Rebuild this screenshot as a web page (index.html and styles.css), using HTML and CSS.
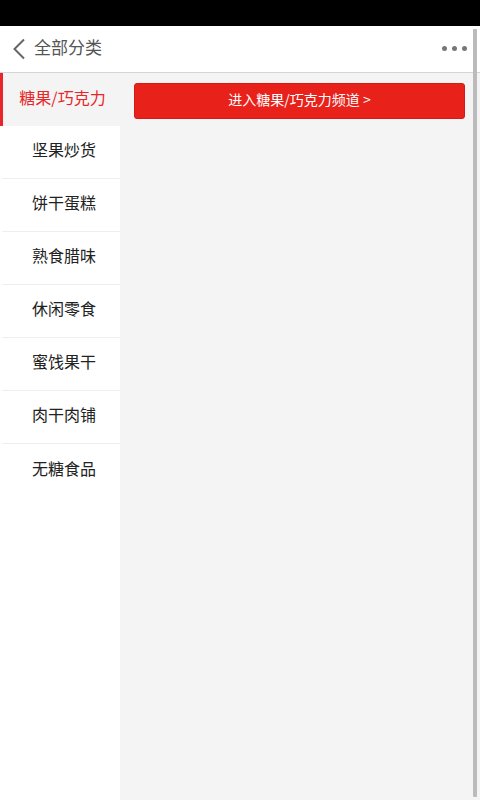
FILE: index.html
```html
<!DOCTYPE html>
<html lang="zh">
<head>
<meta charset="utf-8">
<link rel="stylesheet" href="styles.css">
</head>
<body>
<div class="app">
  <div class="statusbar"></div>
  <header class="topbar">
    <div class="left">
      <svg class="back" width="14" height="22" viewBox="0 0 14 22"><path d="M12 1.5 L2.5 11 L12 20.5" fill="none" stroke="#666" stroke-width="2"/></svg>
      <span class="title">全部分类</span>
    </div>
    <div class="more"><i></i><i></i><i></i></div>
  </header>
  <div class="body">
    <nav class="side">
      <div class="item active">糖果/巧克力</div>
      <div class="item">坚果炒货</div>
      <div class="item">饼干蛋糕</div>
      <div class="item">熟食腊味</div>
      <div class="item">休闲零食</div>
      <div class="item">蜜饯果干</div>
      <div class="item">肉干肉铺</div>
      <div class="item last">无糖食品</div>
    </nav>
    <main class="content">
      <div class="channel">进入糖果/巧克力频道 &gt;</div>
    </main>
  </div>
  <div class="scrollbar"></div>
</div>
</body>
</html>
```
FILE: styles.css
```css
* { box-sizing: border-box; }
html, body { margin: 0; padding: 0; }
body {
  font-family: "Noto Sans CJK SC", "Noto Sans", sans-serif;
  background: #fff;
}
.app {
  position: relative;
  width: 480px;
  height: 800px;
  display: flex;
  flex-direction: column;
  overflow: hidden;
}
.statusbar { height: 26px; background: #000; flex: none; }
.topbar {
  height: 47px;
  flex: none;
  display: flex;
  align-items: center;
  justify-content: space-between;
  background: #fff;
  border-bottom: 1px solid #d4d4d4;
  padding: 0 13px 4px 12px;
}
.left { display: flex; align-items: center; }
.back { display: block; margin-right: 8px; margin-top: 4px; }
.title { font-size: 17px; color: #555; line-height: 20px; }
.more { display: flex; gap: 5px; margin-top: 2px; }
.more i { width: 5px; height: 5px; border-radius: 50%; background: #777; display: block; }
.body { flex: 1; display: flex; background: #f4f4f4; }
.side { width: 120px; flex: none; background: #fff; display: flex; flex-direction: column; }
.item {
  height: 53px;
  display: flex;
  align-items: center;
  justify-content: center;
  padding-left: 6px;
  padding-bottom: 6px;
  font-size: 16px;
  color: #222;
  border-bottom: 1px solid #eee;
  margin-left: 2px;
}
.item.last { border-bottom: none; }
.item.active {
  margin-left: 0;
  background: #f4f4f4;
  color: #e8262a;
  border-left: 3px solid #e8262a;
  border-bottom: none;
  padding-left: 2px;
}
.content { flex: 1; padding: 10px 15px 0 14px; }
.channel {
  height: 36px;
  background: #e8211a;
  border: 1px solid #d41a14;
  border-radius: 3px;
  color: #fff;
  font-size: 14px;
  display: flex;
  align-items: center;
  justify-content: center;
  padding-bottom: 4px;
}
.scrollbar {
  position: absolute;
  right: 3px;
  top: 29px;
  width: 4px;
  height: 768px;
  background: #bbb;
  border-radius: 1px;
}
```
